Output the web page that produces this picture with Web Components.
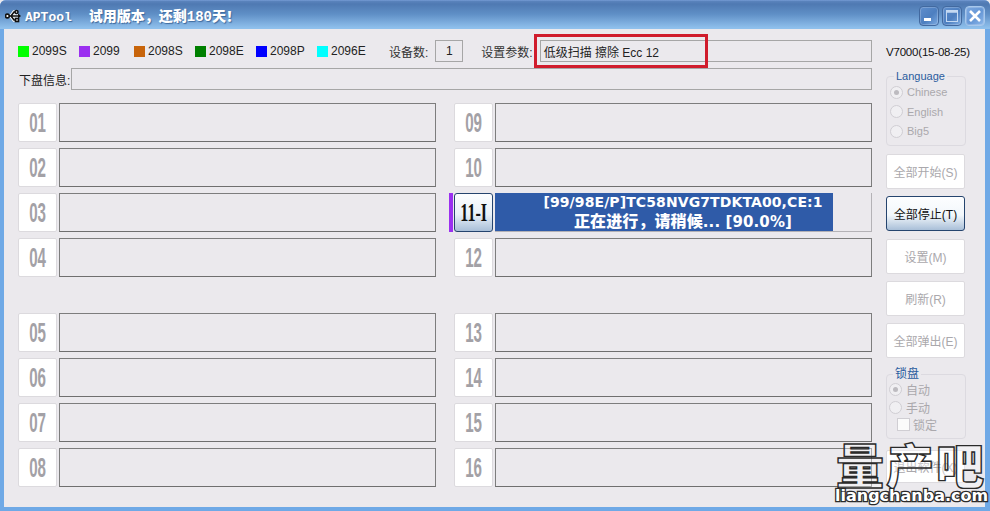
<!DOCTYPE html>
<html>
<head>
<meta charset="utf-8">
<title>APTool</title>
<style>
  html, body { margin: 0; padding: 0; background: #ebe9ed; }
  body { width: 990px; height: 511px; overflow: hidden; font: 12px "Liberation Sans", "Noto Sans CJK SC", sans-serif; color: #111; }
  ap-disk .line2 { font-size: 15px; }
  ap-disk .line2 b { font-size: 16px; }
  ap-titlebar b { font-size: 14px; margin-left: 17px; }
</style>
</head>
<body>
<ap-window>
  <ap-titlebar slot="title">APTool<b>试用版本，还剩180天！</b></ap-titlebar>

  <ap-toprow slot="top"></ap-toprow>

  <ap-field slot="info" label="下盘信息:"></ap-field>

  <ap-slots slot="left">
    <ap-disk num="01"></ap-disk>
    <ap-disk num="02"></ap-disk>
    <ap-disk num="03"></ap-disk>
    <ap-disk num="04"></ap-disk>
    <ap-disk num="05" class="gap"></ap-disk>
    <ap-disk num="06"></ap-disk>
    <ap-disk num="07"></ap-disk>
    <ap-disk num="08"></ap-disk>
  </ap-slots>

  <ap-slots slot="right">
    <ap-disk num="09"></ap-disk>
    <ap-disk num="10"></ap-disk>
    <ap-disk num="11-I" active progress="90">[99/98E/P]TC58NVG7TDKTA00,CE:1<br><span class="line2"><b>正在进行，请稍候</b>... [90.0%]</span></ap-disk>
    <ap-disk num="12"></ap-disk>
    <ap-disk num="13" class="gap"></ap-disk>
    <ap-disk num="14"></ap-disk>
    <ap-disk num="15"></ap-disk>
    <ap-disk num="16"></ap-disk>
  </ap-slots>

  <ap-side slot="side">
    <div class="version">V7000(15-08-25)</div>
    <ap-group heading="Language" class="lang">
      <ap-radio checked>Chinese</ap-radio>
      <ap-radio>English</ap-radio>
      <ap-radio>Big5</ap-radio>
    </ap-group>
    <ap-button class="first">全部开始(S)</ap-button>
    <ap-button primary>全部停止(T)</ap-button>
    <ap-button>设置(M)</ap-button>
    <ap-button>刷新(R)</ap-button>
    <ap-button>全部弹出(E)</ap-button>
    <ap-group heading="锁盘" class="lock">
      <ap-radio checked>自动</ap-radio>
      <ap-radio>手动</ap-radio>
      <ap-radio box>锁定</ap-radio>
    </ap-group>
    <ap-button class="exit">退出软件(X)</ap-button>
  </ap-side>

  <ap-watermark slot="overlay"></ap-watermark>
</ap-window>

<script>
class ApWindow extends HTMLElement {
  constructor() {
    super();
    this.attachShadow({ mode: "open" }).innerHTML = `
      <style>
        :host { display: flex; flex-direction: column; width: 990px; height: 511px; box-sizing: border-box;
          background: #6fa9e6; border-radius: 6px 6px 0 0; overflow: hidden; position: relative; }
        .client { flex: 1; margin: 0 5px 4px 4px; background: #ebe9ed; padding: 11px 19px 0 14px; display: flex; gap: 14px; min-height: 0; }
        .main { width: 854px; flex: none; display: flex; flex-direction: column; }
        .cols { display: flex; justify-content: space-between; margin-top: 13px; }
      </style>
      <slot name="title"></slot>
      <div class="client">
        <div class="main">
          <slot name="top"></slot>
          <slot name="info"></slot>
          <div class="cols"><slot name="left"></slot><slot name="right"></slot></div>
        </div>
        <slot name="side"></slot>
      </div>
      <slot name="overlay"></slot>
    `;
  }
}

class ApTitlebar extends HTMLElement {
  constructor() {
    super();
    this.attachShadow({ mode: "open" }).innerHTML = `
      <style>
        :host { display: flex; align-items: center; height: 29px; flex: none; box-sizing: border-box; padding: 0 5px 0 5px;
          background: linear-gradient(#7ea3dc 0, #5b84bd 1px, #4f79b2 4px, #5f8fc6 14px, #8fc0ec 28px); }
        .icon { width: 16px; height: 18px; flex: none; margin-top: 2px; }
        .text { margin-left: 4px; font: bold 13px "Liberation Mono", "Noto Sans CJK SC", monospace; color: #fff; text-shadow: 1px 1px 1px #3e6a9e; white-space: pre; }
        .btns { margin-left: auto; display: flex; gap: 3px; margin-top: 2px; }
        .b { width: 20px; height: 20px; box-sizing: border-box; border: 1px solid #42699f; border-radius: 4px; box-shadow: inset 0 0 0 1px rgba(255,255,255,.2);
          background: linear-gradient(135deg, #5f8ecc, #4d7fc0 55%, #7dabe2); display: flex; }
        .b.x { border-color: #a8c8ec; background: linear-gradient(135deg, #7ba8e0, #6697d6 55%, #8db8ea); }
        svg.g { width: 18px; height: 18px; }
      </style>
      <svg class="icon" viewBox="0 0 16 18" fill="none" stroke="#111" stroke-width="1.6">
        <path d="M3 9h11M6 9l3-4h2M6 9l3 4h2" stroke="#fff" stroke-width="3.4"/>
        <path d="M3 9h11M6 9l3-4h2M6 9l3 4h2"/>
        <circle cx="2.4" cy="9" r="1.9" fill="#fff"/>
        <circle cx="11.5" cy="5" r="1.5" fill="#fff"/>
        <rect x="10.5" y="11.5" width="3" height="3" fill="#fff"/>
        <path d="M13 6.5l3 2.5-3 2.5z" fill="#111" stroke="none"/>
      </svg>
      <span class="text"><slot></slot></span>
      <div class="btns">
        <div class="b"><svg class="g" viewBox="0 0 18 18"><rect x="4" y="11" width="7" height="3" fill="#fff"/></svg></div>
        <div class="b"><svg class="g" viewBox="0 0 18 18" fill="none" stroke="#c4d9f2"><rect x="3.5" y="3.5" width="11" height="11"/><path d="M3.5 4.5h11" stroke-width="2.4"/></svg></div>
        <div class="b x"><svg class="g" viewBox="0 0 18 18" fill="none" stroke="#fff" stroke-width="2.6"><path d="M4 4l10 10M14 4L4 14"/></svg></div>
      </div>
    `;
  }
}

class ApToprow extends HTMLElement {
  constructor() {
    super();
    const legend = [["#00ff00", "2099S", 61], ["#9b30f0", "2099", 55], ["#c8640a", "2098S", 61], ["#008000", "2098E", 61], ["#0000ff", "2098P", 61], ["#00ffff", "2096E", 72]];
    this.attachShadow({ mode: "open" }).innerHTML = `
      <style>
        :host { display: flex; align-items: center; height: 22px; font-size: 12px; position: relative; }
        .item { display: flex; align-items: center; gap: 3px; flex: none; color: #222; }
        .sw { width: 11px; height: 11px; flex: none; }
        .lbl { color: #333; white-space: nowrap; }
        .count { width: 28px; height: 22px; box-sizing: border-box; border: 1px solid #a6a6a6; display: flex; align-items: center; justify-content: center; margin: 0 18px 0 7px; color: #222; }
        .params { flex: 1; height: 22px; box-sizing: border-box; border: 1px solid #a6a6a6; margin-left: 7px; padding-left: 3px; display: flex; align-items: center; color: #222; white-space: nowrap; }
        /* red annotation drawn over the screenshot */
        .mark { position: absolute; left: 516px; top: -6px; width: 174px; height: 34px; box-sizing: border-box; border: 3px solid #d01c2c; }
      </style>
      ${legend.map(([c, t, w]) => `<div class="item" style="width:${w}px"><span class="sw" style="background:${c}"></span>${t}</div>`).join("")}
      <span class="lbl">设备数:</span>
      <div class="count">1</div>
      <span class="lbl">设置参数:</span>
      <div class="params">低级扫描 擦除 Ecc 12</div>
      <div class="mark"></div>
    `;
  }
}

class ApField extends HTMLElement {
  constructor() {
    super();
    this.attachShadow({ mode: "open" }).innerHTML = `
      <style>
        :host { display: flex; align-items: center; height: 22px; margin-top: 6px; flex: none; padding-left: 1px; font-size: 12px; color: #222; }
        .f { flex: 1; height: 22px; margin-left: 1px; box-sizing: border-box; border: 1px solid #a6a6a6; }
      </style>
      <span>${this.getAttribute("label")}</span><div class="f"><slot></slot></div>
    `;
  }
}

class ApSlots extends HTMLElement {
  constructor() {
    super();
    this.attachShadow({ mode: "open" }).innerHTML = `
      <style>
        :host { display: flex; flex-direction: column; gap: 6px; width: 418px; }
        ::slotted(.gap) { margin-top: 30px; }
      </style>
      <slot></slot>
    `;
  }
}

class ApDisk extends HTMLElement {
  constructor() {
    super();
    const active = this.hasAttribute("active");
    const pct = this.getAttribute("progress") || 0;
    this.attachShadow({ mode: "open" }).innerHTML = `
      <style>
        :host { display: flex; gap: 2px; height: 39px; width: 418px; position: relative; }
        .num { width: 39px; height: 39px; box-sizing: border-box; flex: none; background: #fff; border: 1px solid #dcdade; border-radius: 2px;
          display: flex; align-items: center; justify-content: center; color: #a3a1a6; overflow: hidden; }
        .num span { font: bold 28px "Liberation Sans", sans-serif; display: inline-block; transform: scaleX(.54); white-space: nowrap; }
        .box { flex: 1; box-sizing: border-box; border: 1px solid #7d7d7d; border-bottom-color: #6f6f6f; display: flex; align-items: center; justify-content: center;
          text-align: center; color: #fff; font: bold 14px/19px "DejaVu Sans", "Noto Sans CJK SC", sans-serif; letter-spacing: .1px; white-space: nowrap;
          background: linear-gradient(#2f5ba8, #2f5ba8) no-repeat; background-size: ${pct}% 100%; }
        :host([active]) .num { border: 1px solid #25446e; border-radius: 3px; color: #111; background: linear-gradient(#fdfeff, #e9f1f9 55%, #a9bfd8); }
        :host([active]) .box { border-color: #b4b2b6; border-width: 0 1px 1px 0; }
        :host([active]) .num span { font: bold 26px "Liberation Serif", serif; transform: scaleX(.62); }
        /* device type strip left of the button */
        .type { position: absolute; left: -5px; top: 0; width: 4px; height: 39px; background: #9b30f0; }
      </style>
      ${active ? '<div class="type"></div>' : ""}
      <div class="num"><span>${this.getAttribute("num")}</span></div>
      <div class="box"><div><slot></slot></div></div>
    `;
  }
}

class ApSide extends HTMLElement {
  constructor() {
    super();
    this.attachShadow({ mode: "open" }).innerHTML = `
      <style>
        :host { display: flex; flex-direction: column; width: 80px; flex: none; }
        ::slotted(.version) { height: 22px; line-height: 24px; font-size: 11.5px; color: #111; white-space: nowrap; letter-spacing: -.2px; margin-bottom: 14px; }
        ::slotted(.lang) { height: 70px; margin-bottom: 8px; font-size: 11px; --row: 20.5px; }
        ::slotted(.lock) { height: 65px; margin-top: 9px; padding-left: 2px; font-size: 12px; --row: 19px; }
        ::slotted(.exit) { margin-top: 11px; height: 33px; }
      </style>
      <slot></slot>
    `;
  }
}

class ApGroup extends HTMLElement {
  constructor() {
    super();
    this.attachShadow({ mode: "open" }).innerHTML = `
      <style>
        :host { display: flex; flex-direction: column; box-sizing: border-box; border: 1px solid #dcdae0; border-radius: 4px; padding: 0 0 0 3px; }
        .h { align-self: flex-start; margin: -8px 0 0 4px; padding: 0 2px; background: #ebe9ed; color: #2a5c9e; font-size: inherit; line-height: 14px; height: 14px; }
      </style>
      <div class="h">${this.getAttribute("heading")}</div>
      <slot></slot>
    `;
  }
}

class ApRadio extends HTMLElement {
  constructor() {
    super();
    const box = this.hasAttribute("box");
    this.attachShadow({ mode: "open" }).innerHTML = `
      <style>
        :host { display: flex; align-items: center; gap: 4px; height: var(--row, 19px); color: #aaa8ac; white-space: nowrap; margin-top: -1px; }
        :host([box]) { margin-left: 8px; height: 16px; gap: 3px; }
        .c { width: 13px; height: 13px; box-sizing: border-box; border: 1px solid #d0ced3; border-radius: 50%; background: #f0eff2; display: flex; align-items: center; justify-content: center; flex: none; }
        .c.s { border-radius: 0; background: #fbfbfb; }
        .d { width: 5px; height: 5px; border-radius: 50%; background: #bdbbc0; }
      </style>
      <span class="c ${box ? "s" : ""}">${this.hasAttribute("checked") ? '<span class="d"></span>' : ""}</span><slot></slot>
    `;
  }
}

class ApButton extends HTMLElement {
  constructor() {
    super();
    this.attachShadow({ mode: "open" }).innerHTML = `
      <style>
        :host { display: flex; align-items: center; justify-content: center; width: 79px; height: 35px; box-sizing: border-box; flex: none; margin-bottom: 7px;
          background: #fff; border: 1px solid #dcdade; border-radius: 2px; color: #aaa8ac; font-size: 12px; white-space: nowrap; }
        :host([primary]) { color: #111; margin-bottom: 8px; border: 1px solid #25446e; border-radius: 3px; background: linear-gradient(#fdfeff, #f2f7fb 55%, #a9bfd8); }
      </style>
      <slot></slot>
    `;
  }
}

class ApWatermark extends HTMLElement {
  constructor() {
    super();
    this.attachShadow({ mode: "open" }).innerHTML = `
      <style>
        /* site logo stamped over the corner of the window */
        :host { position: absolute; left: 835px; top: 439px; width: 150px; display: block; text-align: center; pointer-events: none; }
        .cn, .en { display: block; white-space: nowrap; }
        .cn { font: 900 48px/48px "Noto Sans CJK SC", sans-serif; letter-spacing: 2px; margin-right: -2px; color: rgba(255,255,255,.35); -webkit-text-stroke: 1.4px #2a2a2a; }
        .en { font: bold 16px/18px "DejaVu Sans", sans-serif; color: #fff; -webkit-text-stroke: 2.6px #2a2a2a; paint-order: stroke fill; }
      </style>
      <span class="cn">量产吧</span>
      <span class="en">liangchanba.com</span>
    `;
  }
}

customElements.define("ap-window", ApWindow);
customElements.define("ap-titlebar", ApTitlebar);
customElements.define("ap-toprow", ApToprow);
customElements.define("ap-field", ApField);
customElements.define("ap-slots", ApSlots);
customElements.define("ap-disk", ApDisk);
customElements.define("ap-side", ApSide);
customElements.define("ap-group", ApGroup);
customElements.define("ap-radio", ApRadio);
customElements.define("ap-button", ApButton);
customElements.define("ap-watermark", ApWatermark);
</script>
</body>
</html>
